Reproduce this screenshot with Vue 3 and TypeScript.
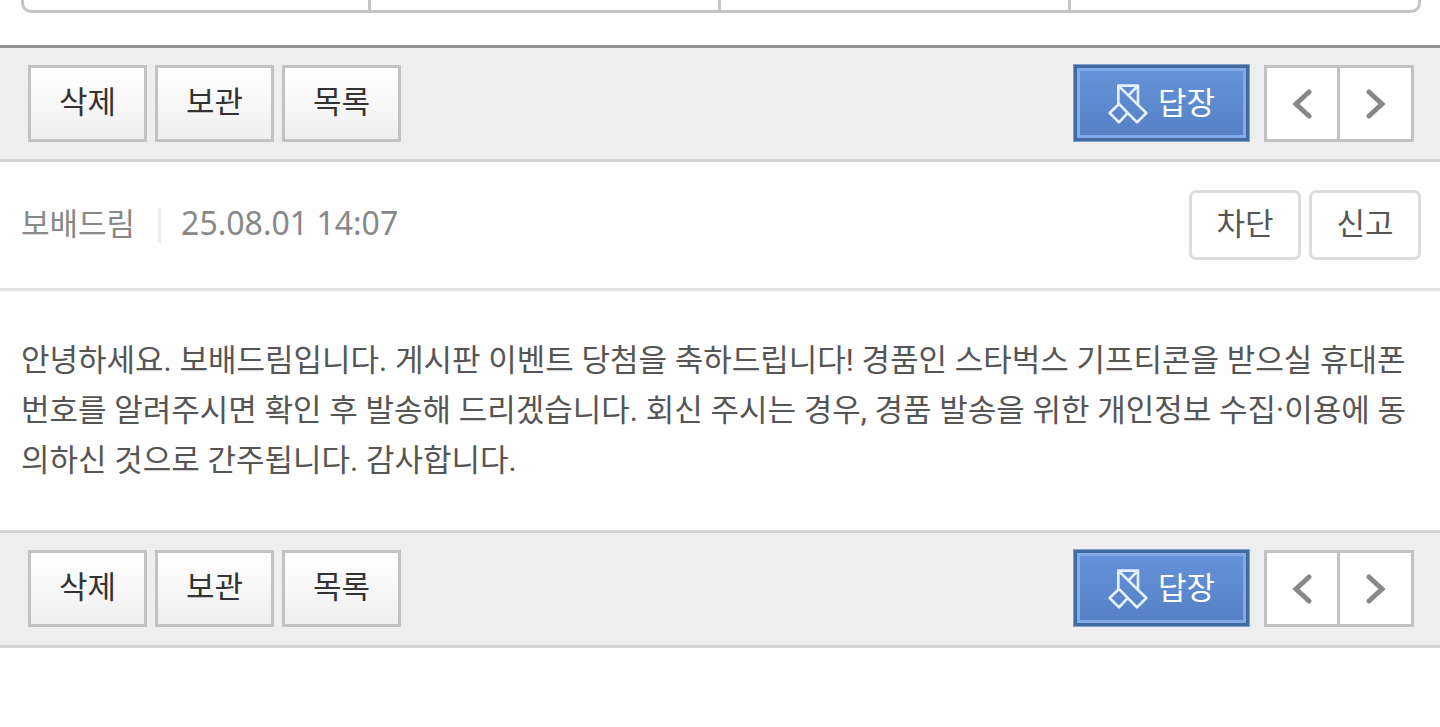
<script setup lang="ts">
interface Action {
  id: string
  label: string
}

const tabs: number[] = [1, 2, 3, 4]
const toolbars: string[] = ['top', 'bottom']
const actions: Action[] = [
  { id: 'delete', label: '삭제' },
  { id: 'keep', label: '보관' },
  { id: 'list', label: '목록' },
]
const senderActions: Action[] = [
  { id: 'block', label: '차단' },
  { id: 'report', label: '신고' },
]
const sender = '보배드림'
const sentAt = '25.08.01 14:07'
const message =
  '안녕하세요. 보배드림입니다. 게시판 이벤트 당첨을 축하드립니다! 경품인 스타벅스 기프티콘을 받으실 휴대폰 번호를 알려주시면 확인 후 발송해 드리겠습니다. 회신 주시는 경우, 경품 발송을 위한 개인정보 수집·이용에 동의하신 것으로 간주됩니다. 감사합니다.'
</script>

<template>
  <main class="page">
    <div class="tabs">
      <div v-for="tab in tabs" :key="tab" class="tab"></div>
    </div>

    <template v-for="position in toolbars" :key="position">
      <div class="toolbar" :class="position">
        <div class="actions">
          <button v-for="action in actions" :key="action.id" type="button" class="action">
            {{ action.label }}
          </button>
        </div>
        <div class="side">
          <button type="button" class="reply">
            <svg class="pencil" viewBox="57 43 120 120" aria-hidden="true">
              <path d="M88 103V48H147V106M88 48L172 130L144 158L90 103L62 130L90 158L116 130M147 48L118 78" />
            </svg>
            <span>답장</span>
          </button>
          <div class="pager">
            <button type="button" class="step" aria-label="이전">
              <svg class="arrow" viewBox="0 0 20 30" aria-hidden="true"><path d="M17 3L4 15L17 27" /></svg>
            </button>
            <button type="button" class="step" aria-label="다음">
              <svg class="arrow" viewBox="0 0 20 30" aria-hidden="true"><path d="M3 3L16 15L3 27" /></svg>
            </button>
          </div>
        </div>
      </div>

      <article v-if="position === 'top'">
        <header class="meta">
          <span class="sender">{{ sender }}</span>
          <time class="date">{{ sentAt }}</time>
          <div class="sender-actions">
            <button v-for="action in senderActions" :key="action.id" type="button" class="small">
              {{ action.label }}
            </button>
          </div>
        </header>
        <p class="message">{{ message }}</p>
      </article>
    </template>
  </main>
</template>

<style>
body {
  margin: 0;
  background: #fefefe;
}
</style>

<style scoped>
.page {
  font-family: "Noto Sans", "Noto Sans CJK KR", sans-serif;
  font-size: 31px;
  line-height: 50px;
  color: #555;
}

.page * {
  box-sizing: border-box;
}

button {
  font: inherit;
  margin: 0;
  padding: 0;
  cursor: pointer;
}

.tabs {
  display: flex;
  margin: 0 19px 32px 21px;
}

.tab {
  width: 25%;
  padding-top: 10px;
  border: solid #c4c4c4;
  border-width: 0 3px 3px 0;
}

.tab:first-child {
  border-left-width: 3px;
  border-bottom-left-radius: 10px;
}

.tab:last-child {
  border-bottom-right-radius: 10px;
}

.toolbar {
  display: flex;
  justify-content: space-between;
  padding: 17px 26px 17px 28px;
  background: #eee;
  border-top: 3px solid #939393;
  border-bottom: 3px solid #d5d5d5;
}

.toolbar.bottom {
  border-top-color: #d5d5d5;
  padding-bottom: 18px;
}

.actions {
  display: flex;
  gap: 8px;
}

.action {
  width: 119px;
  height: 77px;
  padding-bottom: 6px;
  color: #333;
  background: linear-gradient(#fff, #efefef);
  border: 3px solid #c2c2c2;
}

.side {
  display: flex;
  gap: 15px;
}

.reply {
  display: flex;
  align-items: center;
  justify-content: center;
  gap: 10px;
  width: 175px;
  height: 76px;
  padding-top: 2px;
  color: #fff;
  background: linear-gradient(#6592d8, #5580c4);
  border: 3px solid #43699f;
  box-shadow: inset 0 0 0 3px #80aae8, 0 0 0 1px #7ba0d6;
}

.reply span {
  padding-bottom: 5px;
}

.pencil {
  width: 40px;
  height: 40px;
  fill: none;
  stroke: #e4f0ff;
  stroke-width: 8;
  stroke-linejoin: round;
}

.pager {
  display: flex;
  height: 77px;
  background: #fff;
  border: 3px solid #c2c2c2;
}

.step {
  display: flex;
  align-items: center;
  justify-content: center;
  width: 70px;
  background: none;
  border: 0;
}

.step + .step {
  width: 74px;
  border-left: 3px solid #c2c2c2;
}

.arrow {
  width: 20px;
  height: 30px;
  fill: none;
  stroke: #888;
  stroke-width: 5;
  stroke-linecap: round;
}

.meta {
  display: flex;
  align-items: center;
  padding: 28px 19px 28px 21px;
  color: #888;
  border-bottom: 3px solid #e1e1e1;
}

.sender,
.date {
  padding-bottom: 4px;
}

.date {
  position: relative;
  margin-left: 23px;
  padding-left: 23px;
  font-size: 32px;
}

.date::before {
  content: "";
  position: absolute;
  left: 0;
  top: 10px;
  width: 3px;
  height: 35px;
  background: #ededed;
}

.sender-actions {
  display: flex;
  gap: 8px;
  margin-left: auto;
}

.small {
  width: 112px;
  height: 70px;
  padding-bottom: 4px;
  color: #555;
  background: #fff;
  border: 3px solid #dcdcdc;
  border-radius: 7px;
}

.message {
  margin: 0;
  padding: 45px 19px 44px 21px;
  font-family: Roboto, "Noto Sans CJK KR", sans-serif;
}
</style>
